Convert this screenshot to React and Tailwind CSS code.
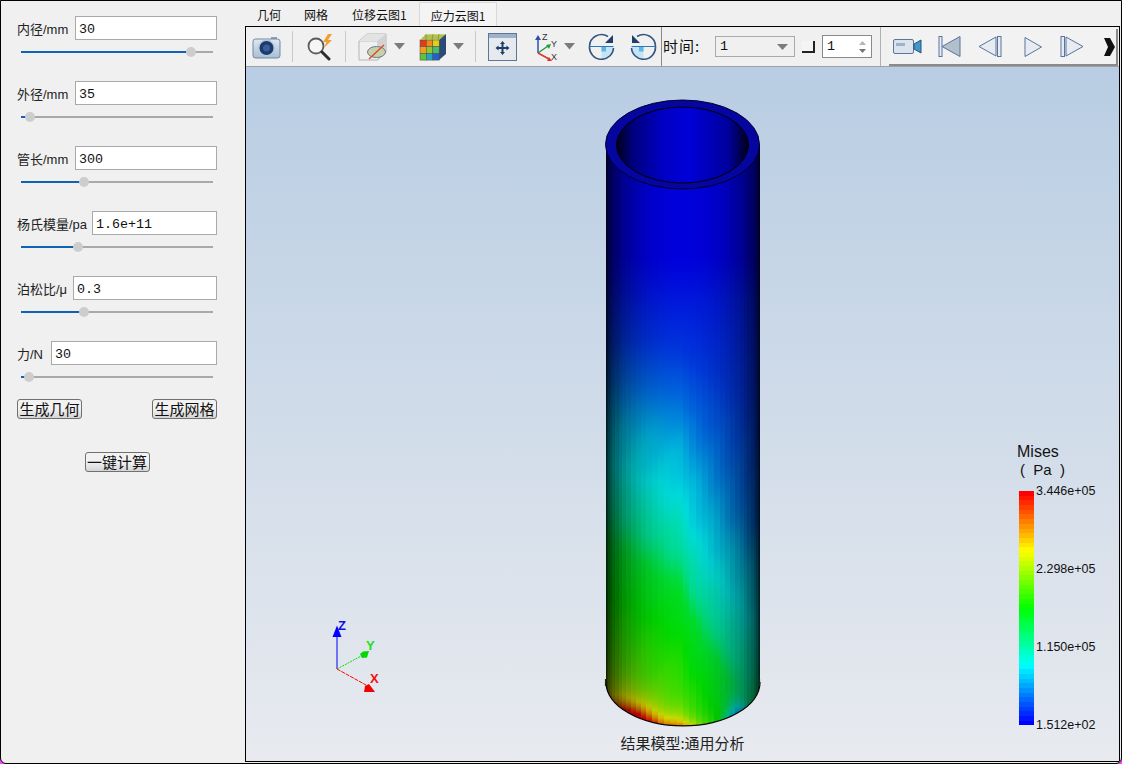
import React from "react";

const params = [
  { label: "内径/mm", labelW: "w-[58px]", value: "30", thumb: 170 },
  { label: "外径/mm", labelW: "w-[58px]", value: "35", thumb: 9 },
  { label: "管长/mm", labelW: "w-[58px]", value: "300", thumb: 63 },
  { label: "杨氏模量/pa", labelW: "w-[75px]", value: "1.6e+11", thumb: 57 },
  { label: "泊松比/μ", labelW: "w-[56px]", value: "0.3", thumb: 63 },
  { label: "力/N", labelW: "w-[34px]", value: "30", thumb: 8 },
];

// same scale as the legend: 0 blue, .25 cyan, .5 green, .75 yellow, 1 red
function jet(v) {
  const t = Math.min(1, Math.max(0, v)) * 4;
  if (t < 1) return [0, t, 1];
  if (t < 2) return [0, 1, 2 - t];
  if (t < 3) return [t - 2, 1, 0];
  return [1, 4 - t, 0];
}

const rgb = (c, k = 1) =>
  `rgb(${c.map((n) => Math.round(n * 255 * k)).join(",")})`;

const baseCurve = [
  [130, 0], [260, 0.0], [350, 0.06], [400, 0.12], [450, 0.2], [500, 0.25],
  [560, 0.34], [590, 0.45], [640, 0.5], [700, 0.58], [730, 0.64],
];

function base(y) {
  if (y <= baseCurve[0][0]) return 0;
  for (let i = 1; i < baseCurve.length; i++) {
    const [y1, v1] = baseCurve[i];
    if (y <= y1) {
      const [y0, v0] = baseCurve[i - 1];
      return v0 + ((v1 - v0) * (y - y0)) / (y1 - y0);
    }
  }
  return 0.64;
}

function stress(x, y) {
  const u = (x - 683) / 77;
  const k = Math.min(1, Math.max(0, (y - 300) / 220));
  const shift = u > 0 ? -130 * Math.pow(u, 0.7) : 50 * -u;
  // distance above the bottom rim, the hot band follows that arc
  const arc = 682 + 44 * Math.sqrt(Math.max(0, 1 - u * u));
  const d = Math.max(0, arc - y);
  const along = (xc, w) => Math.exp(-(((x - xc) / w) ** 2));
  return (
    base(y + k * shift) +
    0.5 * along(636, 24) * Math.exp(-d / 11) +
    0.22 * along(680, 22) * Math.exp(-d / 8) -
    0.3 * along(736, 12) * Math.exp(-d / 16)
  );
}

const strips = Array.from({ length: 38 }, (_, i) => {
  const a0 = -Math.PI / 2 + (i * Math.PI) / 38;
  const a1 = a0 + Math.PI / 38;
  const x0 = 683 + 77 * Math.sin(a0);
  const x1 = 683 + 77 * Math.sin(a1);
  const mid = (x0 + x1) / 2;
  const u = (mid - 683) / 77;
  const shade = 0.03 + 0.83 * Math.sqrt(Math.max(0, 1 - u * u));
  const stops = [];
  for (let y = 130; y <= 730; y += y < 660 ? 14 : 4) {
    const wob = Math.sin(i * 7.3 + y * 0.09) * 0.004 * (y > 420 ? 1 : 0);
    stops.push({
      o: (y - 130) / 600,
      c: rgb(jet(stress(mid, y) + wob), shade),
    });
  }
  return { id: `strip${i}`, x0, w: x1 - x0 + 0.6, stops };
});

const legendBands = Array.from({ length: 50 }, (_, i) => rgb(jet(1 - i / 49)));

function Tube() {
  return (
    <g>
      <defs>
        {strips.map((s) => (
          <linearGradient key={s.id} id={s.id} gradientUnits="userSpaceOnUse" x1="0" y1="130" x2="0" y2="730">
            {s.stops.map((p) => (
              <stop key={p.o} offset={p.o} stopColor={p.c} />
            ))}
          </linearGradient>
        ))}
        <linearGradient id="innerWall" x1="0" y1="0" x2="1" y2="0">
          <stop offset="0" stopColor="#000018" />
          <stop offset="0.12" stopColor="#00007c" />
          <stop offset="0.35" stopColor="#0000c4" />
          <stop offset="0.55" stopColor="#0000d8" />
          <stop offset="0.85" stopColor="#00009c" />
          <stop offset="1" stopColor="#000018" />
        </linearGradient>
        <clipPath id="tubeBody">
          <path d="M606 144V682A77 44 0 0 0 760 682V144Z" />
        </clipPath>
      </defs>
      <g clipPath="url(#tubeBody)" shapeRendering="crispEdges">
        {strips.map((s) => (
          <rect key={s.id} x={s.x0} y="130" width={s.w} height="600" fill={`url(#${s.id})`} />
        ))}
      </g>
      <path d="M606 682A77 44 0 0 0 760 682" fill="none" stroke="#050505" strokeWidth="1.2" />
      <path d="M605.500 679V686M759.500 679V686" stroke="#1a2a10" strokeWidth="1.2" />
      <ellipse cx="682.500" cy="144.500" rx="77" ry="44.500" fill="#0505a0" stroke="#000030" strokeWidth="1" />
      <ellipse cx="682.500" cy="145" rx="66" ry="38" fill="url(#innerWall)" stroke="#000" strokeWidth="1" />
    </g>
  );
}

function Triad() {
  return (
    <g>
      <path d="M337 669V632" stroke="#0000ff" strokeWidth="1" />
      <path d="M337 625.500L341.500 637H332.500Z" fill="#0000ff" />
      <path d="M337 669L363 655" stroke="#00e000" strokeWidth="1" strokeDasharray="2 1" />
      <path d="M369 651L367 657.500L362 658L360 654L363 651.500Z" fill="#00d800" />
      <path d="M337 669L366 685" stroke="#ff0000" strokeWidth="1" strokeDasharray="4 1" />
      <path d="M375 692L364 692L365 686L369 684Z" fill="#f00000" />
      <g fontFamily="Liberation Sans, sans-serif" fontWeight="700" fontSize="13">
        <text x="338" y="630" fill="#1010e0">Z</text>
        <text x="366" y="650" fill="#20e020">Y</text>
        <text x="370" y="683" fill="#f01010">X</text>
      </g>
    </g>
  );
}

function Slider({ thumb }) {
  return (
    <div className="relative mx-[4px] h-[16px] flex items-center">
      <div className="h-[2px] w-full bg-[#a9a9a9]">
        <div className="h-[2px] bg-[#0f62b4]" style={{ width: thumb }} />
      </div>
      <div
        className="absolute top-[3px] h-[10px] w-[10px] rounded-full bg-[#cdcdcd] -ml-[5px]"
        style={{ left: thumb }}
      />
    </div>
  );
}

function ParamRow({ p }) {
  return (
    <div className="flex flex-col gap-[4px]">
      <div className="flex items-center h-[24px]">
        <span className={`${p.labelW} shrink-0 pt-[3px] text-[13px] text-[#222] font-['Liberation_Sans','Noto_Sans_CJK_SC',sans-serif] whitespace-nowrap`}>
          {p.label}
        </span>
        <div className="flex-1 h-[24px] bg-white border border-[#a9a9a9] pl-[3px] pt-[3px] flex items-center text-[13.33px] text-[#111] font-['Liberation_Mono',monospace]">
          {p.value}
        </div>
      </div>
      <Slider thumb={p.thumb} />
    </div>
  );
}

function PanelButton({ children }) {
  return (
    <button className="h-[20px] w-[65px] rounded-[3px] border border-[#707070] bg-[linear-gradient(#f2f2f2_50%,#d4d4d4)] text-[15px] leading-[18px] text-[#111] font-['Noto_Sans_CJK_SC',sans-serif] whitespace-nowrap">
      {children}
    </button>
  );
}

function Sep() {
  return <div className="w-px h-[31px] bg-[#c9c9c9] shrink-0" />;
}

function Caret() {
  return (
    <svg width="11" height="7" viewBox="0 0 11 7" className="shrink-0">
      <path d="M0 0H11L5.500 6.500Z" fill="#7c7c7c" />
    </svg>
  );
}

function CameraIcon() {
  return (
    <svg width="30" height="25" viewBox="0 0 30 25" className="shrink-0">
      <defs>
        <linearGradient id="camBody" x1="0" y1="0" x2="0" y2="1">
          <stop offset="0" stopColor="#dfe8f2" />
          <stop offset="1" stopColor="#a9bdd3" />
        </linearGradient>
      </defs>
      <path d="M19 3h6v3h-6z" fill="#8ea4bd" />
      <rect x="1" y="5" width="27" height="19" rx="2.500" fill="url(#camBody)" stroke="#6f88a4" />
      <circle cx="14.500" cy="14" r="8.500" fill="#b4c8dc" />
      <circle cx="14.500" cy="14" r="7" fill="#1c3b6e" />
      <circle cx="14.500" cy="14" r="3.500" fill="#3e5f95" />
    </svg>
  );
}

function ZoomIcon() {
  return (
    <svg width="30" height="28" viewBox="0 0 30 28" className="shrink-0">
      <circle cx="11" cy="13" r="7.500" fill="#f4f6f8" stroke="#5c5c5c" strokeWidth="1.800" />
      <path d="M17 19l7 7" stroke="#2e2e2e" strokeWidth="3" strokeLinecap="round" />
      <path d="M23 1l-5 8h3.500l-2.500 6 8-8h-4l4-6z" fill="#f0a030" />
    </svg>
  );
}

function ClipBoxIcon() {
  return (
    <svg width="30" height="30" viewBox="0 0 30 30" className="shrink-0">
      <path d="M1 9L9 2H28V20L20 28H1Z" fill="#f0f0f0" stroke="#b5b5b5" />
      <path d="M1 9H20V28M20 9L28 2" fill="none" stroke="#c0c0c0" />
      <path d="M1 9L9 2H28L20 9Z" fill="#e3e3e3" />
      <path d="M20 9L28 2V20L20 28Z" fill="#d2d2d2" />
      <ellipse cx="18.500" cy="20" rx="9" ry="5.500" fill="#c9cfa8" stroke="#6a7c92" />
      <path d="M11 27L26 13" stroke="#d8442a" strokeWidth="1.300" />
    </svg>
  );
}

function ColorCubeIcon() {
  const high = ["#e03a20", "#f08a20", "#e0d020"];
  const mid = ["#f0a020", "#90c830", "#40c070"];
  const low = ["#60c040", "#20a8c0", "#2060d0"];
  return (
    <svg width="28" height="28" viewBox="0 0 28 28" className="shrink-0">
      <path d="M1 7L7 1H27L20 7Z" fill="#c8d860" />
      <path d="M20 7L27 1V21L20 27Z" fill="#2c4a78" />
      {[high, mid, low].map((row, r) =>
        row.map((c, i) => (
          <rect key={`${r}-${i}`} x={1 + i * 6.4} y={7 + r * 6.700} width="6.400" height="6.700" fill={c} stroke="#5a4a30" strokeWidth="0.500" />
        ))
      )}
      <path d="M7 1V7M14 1L13 7M20 1L19 7M3 5H23M5 3H25" stroke="#6a7a30" strokeWidth="0.500" />
    </svg>
  );
}

function FitIcon() {
  return (
    <svg width="29" height="28" viewBox="0 0 29 28" className="shrink-0">
      <rect x="0.500" y="0.500" width="28" height="27" fill="#e6e9ee" stroke="#5c7598" />
      <rect x="1" y="1" width="27" height="4" fill="#9fb2ca" />
      <path d="M14.500 8l2.500 3h-1.500v3h3v-1.500l3 2.500-3 2.500v-1.500h-3v3h1.500l-2.500 3-2.500-3h1.500v-3h-3v1.500l-3-2.500 3-2.500v1.500h3v-3h-1.500z" fill="#1f3f6a" />
    </svg>
  );
}

function AxesIcon() {
  return (
    <svg width="26" height="30" viewBox="0 0 26 30" className="shrink-0">
      <path d="M5 21V6" stroke="#2a50b0" strokeWidth="1.500" />
      <path d="M5 3l3 5H2z" fill="#2a50b0" />
      <path d="M5 21l10-7" stroke="#2a9a40" strokeWidth="1.500" />
      <path d="M18 12l-2 5-3-4z" fill="#2a9a40" />
      <path d="M5 21l11 6" stroke="#e03030" strokeWidth="1.500" />
      <path d="M19 29l-5 0 2-4z" fill="#e03030" />
      <g fontFamily="Liberation Sans, sans-serif" fontSize="9" fill="#333">
        <text x="9" y="8">Z</text>
        <text x="18" y="15">Y</text>
        <text x="18" y="28">X</text>
      </g>
    </svg>
  );
}

function RotateIcon({ flip }) {
  return (
    <svg width="27" height="27" viewBox="0 0 27 27" className={flip ? "shrink-0 -scale-x-100" : "shrink-0"}>
      <path d="M13.500 13.500H25.500A12 12 0 0 1 13.500 25.500Z" fill="#c4e3f6" />
      <path d="M13.500 13.500h4.500v5h-4.500z" fill="#5fb4e6" />
      <path d="M20 3.500A12 12 0 0 0 1.500 13.500A12 12 0 0 0 25.500 15" fill="none" stroke="#33557f" strokeWidth="1.600" />
      <path d="M1.500 13.500H25.500" stroke="#2a78c0" />
      <path d="M25 2v8h-8z" fill="#1f3f6a" />
    </svg>
  );
}

function CameraRollIcon() {
  return (
    <svg width="29" height="17" viewBox="0 0 29 17" className="shrink-0">
      <rect x="0.500" y="1.500" width="20" height="14" rx="1.500" fill="#dbe3ec" stroke="#5c7598" />
      <rect x="3" y="5" width="9" height="3" fill="#9fb2ca" />
      <path d="M21 6l7-4v13l-7-4z" fill="#3d9ac8" stroke="#2a5078" />
    </svg>
  );
}

function TransportIcon({ kind }) {
  const stroke = "#56749c";
  const fill = "#e8ecf2";
  if (kind === "first") {
    return (
      <svg width="23" height="23" viewBox="0 0 23 23" className="shrink-0">
        <rect x="1" y="1.500" width="3" height="20" fill={fill} stroke={stroke} />
        <path d="M22 1.500V21.500L4 11.500Z" fill="#b4bfcc" stroke={stroke} />
      </svg>
    );
  }
  if (kind === "prev") {
    return (
      <svg width="24" height="23" viewBox="0 0 24 23" className="shrink-0">
        <path d="M18 2V21L1 11.500Z" fill={fill} stroke={stroke} />
        <rect x="19.500" y="1.500" width="3.500" height="20" fill={fill} stroke={stroke} />
      </svg>
    );
  }
  if (kind === "next") {
    return (
      <svg width="24" height="23" viewBox="0 0 24 23" className="shrink-0">
        <rect x="1" y="1.500" width="3.500" height="20" fill={fill} stroke={stroke} />
        <path d="M6 2V21L23 11.500Z" fill={fill} stroke={stroke} />
      </svg>
    );
  }
  return (
    <svg width="18" height="22" viewBox="0 0 18 22" className="shrink-0">
      <path d="M1 1.500V20.500L17.500 11Z" fill={fill} stroke={stroke} />
    </svg>
  );
}

function Toolbar() {
  return (
    <div className="flex items-center h-[40px] shrink-0 border-b border-[#a0a0a0] bg-[#f0f0f0] relative">
      <div className="ml-[6px]"><CameraIcon /></div>
      <div className="ml-[10px]"><Sep /></div>
      <div className="ml-[12px]"><ZoomIcon /></div>
      <div className="ml-[10px]"><Sep /></div>
      <div className="ml-[12px]"><ClipBoxIcon /></div>
      <div className="ml-[6px]"><Caret /></div>
      <div className="ml-[14px]"><ColorCubeIcon /></div>
      <div className="ml-[6px]"><Caret /></div>
      <div className="ml-[11px]"><Sep /></div>
      <div className="ml-[12px]"><FitIcon /></div>
      <div className="ml-[16px]"><AxesIcon /></div>
      <div className="ml-[5px]"><Caret /></div>
      <div className="ml-[13px]"><RotateIcon /></div>
      <div className="ml-[15px]"><RotateIcon flip /></div>
      <div className="ml-[4px] w-px h-[39px] bg-[#8a8a8a] shrink-0" />
      <span className="ml-[1px] w-[52px] text-[15px] tracking-[1px] text-[#111] font-['Noto_Sans_CJK_SC',sans-serif] shrink-0">时间:</span>
      <div className="w-[80px] h-[21px] shrink-0 border border-[#a9a9a9] flex items-center justify-between pl-[4px] pr-[6px] text-[13.33px] text-[#111] font-['Liberation_Mono',monospace]">
        1
        <svg width="11" height="6" viewBox="0 0 11 6"><path d="M0 0H11L5.500 6Z" fill="#7c7c7c" /></svg>
      </div>
      <div className="ml-[7px] w-[13px] h-[12px] shrink-0 border-r-2 border-b-2 border-[#222] bg-[#f4f4f4]" />
      <div className="ml-[7px] w-[50px] h-[23px] shrink-0 border border-[#8a8a8a] bg-white flex items-center justify-between pl-[4px] pr-[5px] text-[13.33px] text-[#111] font-['Liberation_Mono',monospace]">
        1
        <svg width="7" height="12" viewBox="0 0 7 12">
          <path d="M3.500 0L7 4H0Z" fill="#b5b5b5" />
          <path d="M3.500 12L7 8H0Z" fill="#777" />
        </svg>
      </div>
      <div className="ml-[8px] w-px h-[39px] bg-[#b0b0b0] shrink-0" />
      <div className="ml-[8px] self-end flex items-center h-[37px] w-[229px] shrink-0 overflow-hidden border-r-2 border-b-2 border-[#8a8a8a] bg-[#f2f2f2] pl-[4px]">
        <CameraRollIcon />
        <div className="ml-[16px]"><TransportIcon kind="first" /></div>
        <div className="ml-[17px]"><TransportIcon kind="prev" /></div>
        <div className="ml-[22px]"><TransportIcon kind="play" /></div>
        <div className="ml-[18px]"><TransportIcon kind="next" /></div>
        <svg width="12" height="20" viewBox="0 0 12 20" className="ml-[20px] shrink-0">
          <path d="M0 1H6L11 10L6 19H0L4 10Z" fill="#111" />
        </svg>
      </div>
    </div>
  );
}

function Legend() {
  return (
    <div className="absolute left-[771px] top-[376px] flex flex-col font-['Liberation_Sans',sans-serif] text-[#111]">
      <div className="text-[16px] leading-[18px]">Mises</div>
      <div className="text-[15px] leading-[18px] pl-[3px] whitespace-pre">(  Pa  )</div>
      <div className="flex mt-[12px] pl-[2px]">
        <div className="w-[15px] h-[234px] flex flex-col">
          {legendBands.map((c, i) => (
            <div key={i} className="flex-1" style={{ background: c }} />
          ))}
        </div>
        <div className="ml-[2px] h-[250px] -mt-[8px] flex flex-col justify-between text-[12.5px] leading-[16px] whitespace-nowrap">
          <span>3.446e+05</span>
          <span>2.298e+05</span>
          <span>1.150e+05</span>
          <span>1.512e+02</span>
        </div>
      </div>
    </div>
  );
}

export default function App() {
  return (
    <div className="w-[1122px] h-[764px] bg-[#ff40ff] overflow-hidden">
      <div className="w-full h-full flex border border-black rounded-b-[6px] overflow-hidden bg-[#f0f0f0]">
        <aside className="w-[244px] shrink-0 pt-[15px] pl-[16px] pr-[28px] flex flex-col">
          <div className="flex flex-col gap-[21px]">
            {params.map((p) => (
              <ParamRow key={p.label} p={p} />
            ))}
          </div>
          <div className="flex justify-between mt-[14px]">
            <PanelButton>生成几何</PanelButton>
            <PanelButton>生成网格</PanelButton>
          </div>
          <div className="flex justify-center mt-[33px]">
            <PanelButton>一键计算</PanelButton>
          </div>
        </aside>
        <main className="flex-1 min-w-0 flex flex-col pr-px pb-px">
          <nav className="h-[25px] shrink-0 flex items-end text-[12px] text-[#111] font-['Noto_Sans_CJK_SC',sans-serif]">
            <span className="ml-[12px] h-[24px] leading-[26px]">几何</span>
            <span className="ml-[23px] h-[24px] leading-[26px]">网格</span>
            <span className="ml-[24px] h-[24px] leading-[26px]">位移云图1</span>
            <span className="ml-[12px] h-[24px] leading-[25px] px-[11px] border border-b-0 border-[#d9d9d9] bg-[#f4f4f4]">应力云图1</span>
          </nav>
          <section className="flex-1 min-h-0 border border-black flex flex-col bg-[#f0f0f0]">
            <Toolbar />
            <div className="relative flex-1 min-h-0 bg-[linear-gradient(#b8cde3,#e8eaef)]">
              <svg className="absolute inset-0 w-full h-full" viewBox="246 67 873 694" preserveAspectRatio="xMinYMin slice">
                <Tube />
                <Triad />
              </svg>
              <Legend />
              <div className="absolute bottom-[9px] left-0 w-full text-center text-[15px] leading-[18px] text-[#222] font-['Noto_Sans_CJK_SC',sans-serif]">
                结果模型:通用分析
              </div>
            </div>
          </section>
        </main>
      </div>
    </div>
  );
}
